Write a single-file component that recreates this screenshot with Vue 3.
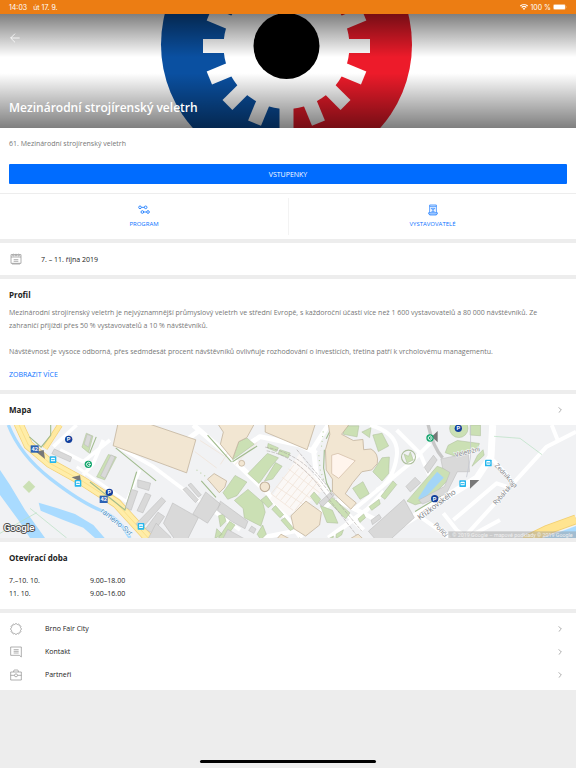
<script setup>
const notchAngles = Array.from({ length: 16 }, (_, i) => i * 22.5)

const hours = [
  { days: '7.–10. 10.', time: '9.00–18.00' },
  { days: '11. 10.', time: '9.00–16.00' },
]

const links = [
  { id: 'city', label: 'Brno Fair City' },
  { id: 'contact', label: 'Kontakt' },
  { id: 'partners', label: 'Partneři' },
]

// Wavy badge outline: twelve bumps around the centre of a 36-unit box.
const badge = Array.from({ length: 72 }, (_, i) => {
  const a = (i * Math.PI) / 36
  const r = 15.4 + 1.8 * Math.cos(12 * a)
  return `${(18 + r * Math.cos(a)).toFixed(2)},${(18 + r * Math.sin(a)).toFixed(2)}`
}).join(' ')

const parkings = [[206, 59], [328, 239], [1375, 25], [1304, 259]]
  .map(([x, y]) => ({ x, y }))
parkings[0].y = 58
parkings[1].y = 217
parkings[3].y = 236
const stops = [[159, 119], [234, 190], [423, 319], [1465, 129], [1388, 191]]
const routes = [[104, 87], [311, 238]]
const rings = [[265, 133], [1290, 54]]
const rowLines = [0, 1, 2, 3, 4, 5]
</script>

<template>
  <div class="page">
    <header class="status">
      <span>14:03</span>
      <span class="date">út 17. 9.</span>
      <span class="power">
        <svg class="wifi" viewBox="0 0 24 18" aria-hidden="true">
          <path d="M1 6a16 16 0 0 1 22 0M5 10.500a10 10 0 0 1 14 0" fill="none" stroke="#fff" stroke-width="3.200" />
          <path d="M8 13.500a6 6 0 0 1 8 0L12 18z" fill="#fff" />
        </svg>
        <span>100 %</span>
        <svg class="battery" viewBox="0 0 42 18" aria-hidden="true">
          <rect x="1" y="1" width="36" height="16" rx="4" fill="none" stroke="#fff" stroke-opacity=".6" stroke-width="1.500" />
          <rect x="2" y="2" width="34" height="14" rx="3" fill="#fff" />
          <path d="M39 6q3 3 0 6z" fill="#fff" fill-opacity=".7" />
        </svg>
      </span>
    </header>

    <section class="hero">
      <svg class="gear" viewBox="0 14 576 114" preserveAspectRatio="xMidYMid slice" aria-hidden="true">
        <path d="M286.500 -81a125.500 125.500 0 0 0 0 251z" fill="#0a50a1" />
        <path d="M286.500 -81a125.500 125.500 0 0 1 0 251z" fill="#ed1b2a" />
        <circle cx="286.500" cy="46" r="63" fill="#fff" />
        <rect
          v-for="a in notchAngles"
          :key="a"
          x="340"
          y="39"
          width="30"
          height="14"
          fill="#fff"
          :transform="`rotate(${a} 286.5 46)`"
        />
        <circle cx="286.500" cy="46" r="33" fill="#000" />
      </svg>
      <div class="shade">
        <button class="back" type="button" aria-label="Zpět">
          <svg viewBox="0 0 30 30" aria-hidden="true">
            <path d="M29 15H2M15 2L2 15l13 13" fill="none" stroke="#fff" stroke-width="2.400" />
          </svg>
        </button>
        <h1>Mezinárodní strojírenský veletrh</h1>
      </div>
    </section>

    <section class="intro">
      <p>61. Mezinárodní strojírenský veletrh</p>
      <button class="tickets" type="button">VSTUPENKY</button>
    </section>

    <nav class="tabs">
      <a href="#program">
        <svg viewBox="0 0 36 36" fill="none" stroke="#1a7bff" stroke-width="2.600" aria-hidden="true">
          <circle cx="6" cy="10" r="4" /><circle cx="23" cy="10" r="4" />
          <circle cx="13" cy="24" r="4" /><circle cx="30" cy="24" r="4" />
          <path d="M10 10h9M17 24h9" />
        </svg>
        PROGRAM
      </a>
      <a href="#vystavovatele">
        <svg viewBox="0 0 36 36" fill="none" stroke="#1a7bff" stroke-width="2.200" aria-hidden="true">
          <path d="M8 26V3h20v23M8 7h20M5 26h26v4H5zM8 30v3h20v-3" />
          <circle cx="18" cy="14" r="2.500" />
          <path d="M18 16v6M13 11v5M23 11v5M13 22h10" />
        </svg>
        VYSTAVOVATELÉ
      </a>
    </nav>

    <section class="when">
      <svg viewBox="0 0 36 36" fill="none" stroke="#8a8a8a" stroke-width="2" aria-hidden="true">
        <path d="M3 5h30v26H3zM3 12h30M11 20h14M11 25h14M6 33h24" />
        <circle cx="10" cy="6" r="2.500" fill="#fff" /><circle cx="18" cy="6" r="2.500" fill="#fff" /><circle cx="26" cy="6" r="2.500" fill="#fff" />
      </svg>
      <span>7. – 11. října 2019</span>
    </section>

    <section class="profile">
      <h2>Profil</h2>
      <p>Mezinárodní strojírenský veletrh je nejvýznamnější průmyslový veletrh ve střední Evropě, s každoroční účastí více než 1 600 vystavovatelů a 80 000 návštěvníků. Ze zahraničí přijíždí přes 50 % vystavovatelů a 10 % návštěvníků.</p>
      <p>Návštěvnost je vysoce odborná, přes sedmdesát procent návštěvníků ovlivňuje rozhodování o investicích, třetina patří k vrcholovému managementu.</p>
      <button class="more" type="button">ZOBRAZIT VÍCE</button>
    </section>

    <section class="map">
      <a class="map-head" href="#mapa">
        <h2>Mapa</h2>
        <svg class="chevron" viewBox="0 0 12 18" aria-hidden="true"><path d="M2 1l8 8-8 8" fill="none" stroke="#999" stroke-width="2.400" /></svg>
      </a>
      <svg class="canvas" viewBox="0 15 1728 339" preserveAspectRatio="xMidYMid slice" role="img" aria-label="Mapa výstaviště">
        <rect y="15" width="1728" height="339" fill="#f1f2f4" />

        <!-- minor streets -->
        <g fill="none" stroke="#fff" stroke-linejoin="round">
          <path d="M230 15L160 80M345 75L460 140L560 215L720 330M310 60L280 130L250 165M180 90L250 125L330 60" stroke-width="11" />
          <path d="M580 15L690 110L800 215L905 354" stroke-width="16" />
          <path d="M560 60L600 30M690 110L780 50L900 75L950 100M985 15L940 85L950 170L1000 240L1090 330" stroke-width="15" />
          <path d="M780 354L900 330L1000 240M985 354L1100 270L1152 215M1010 240L1130 300" stroke-width="14" />
          <path d="M1478 15L1473 110L1430 175L1140 354" stroke-width="21" />
          <path d="M1060 270L1230 130L1290 70M1190 30L1260 100L1290 170M1110 15Q1200 40 1190 110T1130 210" stroke-width="12" />
          <path d="M1728 35L1640 80L1390 354M1655 15L1675 65M1470 110L1530 175M1330 280L1370 330L1390 345M1520 200L1490 190L1360 300M1260 290L1350 354M1500 300L1400 354" stroke-width="12" />
          <path d="M230 140L380 245M380 245L420 150" stroke-width="9" />
        </g>

        <!-- water -->
        <g fill="#a9dbff">
          <path d="M0 150L30 195L75 270L135 354H90L55 300L0 225z" />
          <path d="M116 248L170 264L225 282L280 315L314 354H285L250 323L190 300L122 272z" />
          <path d="M1630 354L1728 318V354z" />
        </g>
        <path d="M25 15Q60 105 150 175T300 270T390 354" fill="none" stroke="#a9dbff" stroke-width="10" />
        <path d="M0 340L110 278M90 265L200 354M1482 49L1560 55L1626 104" fill="none" stroke="#b5dfbf" stroke-width="2" />

        <!-- main road -->
        <path d="M55 10L85 75L150 130L250 185L350 250L445 354" fill="none" stroke="#f3cf72" stroke-width="29" />
        <path d="M135 85L180 15" fill="none" stroke="#f3cf72" stroke-width="17" />
        <path d="M135 85L180 15" fill="none" stroke="#ffe9a0" stroke-width="13" />
        <path d="M55 10L85 75L150 130L250 185L350 250L445 354" fill="none" stroke="#ffeda8" stroke-width="25" />
        <path d="M55 10L85 75L150 130L250 185L350 250L445 354" fill="none" stroke="#f7d878" stroke-width="2" />
        <path d="M1575 362L1640 330L1728 298" fill="none" stroke="#f1cf72" stroke-width="29" />
        <path d="M1575 362L1640 330L1728 298" fill="none" stroke="#ffe490" stroke-width="24" />

        <g transform="translate(0 12) scale(1.102)">
          <!-- plaza -->
          <path d="M735 205L815 80L880 180L840 215L785 250z" fill="#fbf8f6" />
          <g fill="none" stroke="#f0e2d6" stroke-width="2">
            <path v-for="n in rowLines" :key="n" :d="`M${738 + n * 13} ${190 + n * 9}l62 -78`" />
            <path d="M738 190l60 45M752 170l75 50M768 145l80 60M785 122l85 65M800 100l75 70M545 45l65 42M530 75l60 45M600 110l45-70M700 50l-60 60" />
          </g>

          <!-- lawns -->
          <g fill="#cbe0b4" stroke="#aebf9d" stroke-width="1.500">
            <path d="M79 154L96 171L79 188L62 171z" stroke="none" />
            <path d="M295 83L317 90L285 152L263 144zM235 25l18 8-12 45-18-15z" />
            <path d="M633 98L650 48L672 38L692 55z" />
            <path d="M675 135L728 80L758 92L735 120L705 162zM720 155L750 105L768 115L742 150z" />
            <path d="M730 53l28 12-6 10-24-10zM762 70l28 9-5 13-28-11z" />
            <path d="M607 187L640 140L672 158L645 195L620 205z" />
            <path d="M638 208L675 178L715 213L722 240L710 278L665 255L662 230z" />
            <path d="M710 207l15-12 17 23-12 10zM740 232l10-10 22 25-10 8zM765 262l10-7 25 30-10 5zM815 310l37 25-12 5z" />
            <path d="M845 197l10-12 18 20-10 15zM872 222l33 13 15 35-30-2zM895 192l58 50-12 16-48-48z" />
            <path d="M595 250l15-5 5 20-15 15zM590 285l15 15-20 12zM625 265l15 10-30 40-15-5zM700 300l15-25 10 25-15 15z" />
            <path d="M935 5h42l-5 30-37-7zM985 22l25-12-4 27zM1015 30l25-5 18 35-28 15z" />
            <path d="M1040 92l20-2-2 45-18 20-25-25z" />
            <path d="M960 175l28-18 17 33-25 15z" />
            <path d="M1037 197l33-42 10 10-32 40zM1005 225l27-20 3 13-23 17zM975 258l15-13 5 10-15 13zM890 315l18-10-4 14-16 8zM915 300l20-12-5 14-15 10z" />
            <path d="M1212 78L1220 58L1245 45L1305 53L1300 70L1240 88zM1280 3h28v29l-28-2zM1300 85l15-15 3 15-33 30z" />
            <circle cx="1249" cy="12" r="25" />
            <circle cx="1112" cy="90" r="19" fill="none" stroke-width="3" />
            <path d="M1100 82l12 6 5-12 8 22-17 8z" />
            <path d="M1108 210L1190 115L1226 128V145L1165 210L1130 220z" />
          </g>
          <path d="M1190 130L1208 146L1162 195L1147 208L1138 202L1165 160z" fill="#a3d5f7" />
          <g fill="none" stroke="#a1bb8e" stroke-width="3">
            <path d="M245 158L340 234L372 130M80 35l32 28 26-32V3M262 35l-18 45M315 65L425 155M565 30l65 73M633 103L700 60M1130 238l70-42M548 155l40 45" />
            <path d="M883 70l-2 50 8 40 12 25M888 40l10-20" />
          </g>

          <!-- exhibition halls -->
          <g fill="#f2e6d2" stroke="#bfae98" stroke-width="2">
            <path d="M322 -5H392L533 43L508 133L308 59z" />
            <path d="M590 -5H695L672 37L650 48L633 95L600 55L608 22z" />
            <path d="M722 -5V22L836 70L860 -5z" />
            <path d="M893 -5H955L930 28L962 45L988 42L990 70L1010 68Q1032 80 1027 108L1012 125L985 130L960 160L940 190L970 215L955 232L905 185V150L888 125L886 70L898 28z" />
            <path d="M792 250L833 210L875 240L870 275L832 305L800 285z" />
            <path d="M565 150L583 135L617 155L612 172L597 187z" />
            <path d="M740 345L743 325L765 300L802 320V345zM895 345L975 300L1022 345z" />
            <circle cx="658" cy="107" r="8" />
            <circle cx="721" cy="171" r="13" stroke-width="3" />
          </g>
          <path d="M903 85L920 80L967 100L922 148L903 135z" fill="#fff5ed" stroke="#d4bda8" stroke-width="2" />

          <!-- other buildings -->
          <g fill="#d9d9d9" stroke="#bcbcbc" stroke-width="1.500">
            <path d="M148 68l47 22-4 13-50-22zM302 84l11 6-27 58-12-7zM237 28l12 5-8 30-12-8z" />
            <path d="M358 178l17 5-18 52-15-8zM375 152l35 9-5 20-30-9zM396 188l15 6-22 48-16-6z" />
            <path d="M440 200l11 10-66 76-15-14zM430 240l18 12-32 46-20-12zM470 215L540 255L505 325L480 320L445 270z" />
            <path d="M425 270l40 38-15 24-48-17zM498 178l10-6 32 34-8 8zM512 166l8-5 28 32-8 6z" />
            <path d="M560 185L600 218L565 270L525 245zM600 210L675 265L667 285L630 265L592 235z" />
            <path d="M595 335L620 287L700 332V345H600zM685 278l12 8-6 12-14-8z" />
            <path d="M1003 292L1100 205L1128 255L1040 335zM1130 145l15 15-28 25-12-15zM1155 118l25-33 10 13-25 36z" />
            <path d="M1200 95L1275 80L1278 130L1245 130L1215 190L1150 218L1140 207L1210 170L1225 132L1205 120z" />
            <path d="M1010 262l22-16 6 10-24 18zM868 215l32-30 10 8-32 32z" />
          </g>
          <path d="M1165 0Q1178 62 1205 92" fill="none" stroke="#c7c7c7" stroke-width="9" />
          <path d="M1281 -5V90L1270 145" fill="none" stroke="#c4c7d0" stroke-width="2" />

          <!-- tramway -->
          <path d="M722 63Q820 80 880 165L985 292M726 73Q808 88 873 175L970 302M808 70L905 185" fill="none" stroke="#a5a19e" stroke-width="1.500" stroke-dasharray="10 3" />
          <path d="M868 85l4 40 12 36M880 20l-6 52M535 125l25 18" fill="none" stroke="#bad0a7" stroke-width="3" stroke-dasharray="3 10" />
        </g>

        <!-- street labels -->
        <g class="street">
          <text transform="translate(300 275) rotate(39)" class="river">rameno Svr</text>
          <text transform="translate(1260 301) rotate(-37)" class="wide">Křížkovského</text>
          <text transform="translate(1366 112) rotate(-14)">Veletržní</text>
          <text transform="translate(1483 137) rotate(48)">Zedníkova</text>
          <text transform="translate(1488 256) rotate(-48)">Rybářská</text>
          <text transform="translate(1300 315) rotate(48)">Poříčí</text>
        </g>

        <!-- one-way arrows -->
        <path d="M108 95l23-5 4 27zM215 172l25-6 3 20zM1295 50l18-17v34zM1410 180h28l-28 26z" fill="#777" />

        <g v-for="p in parkings" :key="`p${p.x}`">
          <circle :cx="p.x" :cy="p.y" r="11" fill="#123f9c" />
          <text :x="p.x" :y="p.y + 6" class="pin">P</text>
        </g>
        <g v-for="[x, y] in stops" :key="`s${x}`">
          <rect :x="x - 10" :y="y - 10" width="20" height="20" rx="2" fill="#26b7ed" />
          <rect :x="x - 6" :y="y - 6" width="12" height="11" rx="2" fill="#fff" />
          <path :d="`M${x - 5} ${y}h10`" stroke="#26b7ed" stroke-width="3" />
        </g>
        <g v-for="[x, y] in routes" :key="`r${x}`">
          <rect :x="x - 12" :y="y - 11" width="24" height="22" fill="#2b62b4" />
          <text :x="x" :y="y + 6" class="pin">42</text>
        </g>
        <g v-for="[x, y] in rings" :key="`g${x}`" fill="none">
          <circle :cx="x" :cy="y" r="11" fill="#10a56b" />
          <path :d="`M${x + 5} ${y - 4}a6 6 0 1 0 0 8M${x} ${y}h8`" stroke="#fff" stroke-width="3" />
        </g>

        <rect x="1345" y="334" width="383" height="20" fill="#9a9a9a" fill-opacity=".45" />
        <text x="1718" y="350" class="credit">© 2019 Google – mapové podklady © 2019 Google</text>
        <text x="11" y="334" class="brand">Google</text>
      </svg>
    </section>

    <section class="hours">
      <h2>Otevírací doba</h2>
      <table>
        <tbody>
          <tr v-for="h in hours" :key="h.days">
            <th scope="row">{{ h.days }}</th>
            <td>{{ h.time }}</td>
          </tr>
        </tbody>
      </table>
    </section>

    <nav class="links">
      <a v-for="l in links" :key="l.id" :href="`#${l.id}`">
        <svg class="icon" viewBox="0 0 36 36" fill="none" stroke="#8a8a8a" stroke-width="2" aria-hidden="true">
          <polygon v-if="l.id === 'city'" :points="badge" />
          <path v-else-if="l.id === 'contact'" d="M2 3h32v30l-6-5H2zM11 11h15M11 16h15M11 21h15" />
          <template v-else>
            <path d="M2 9h32v24H2zM11 9V6q0-3 3-3h8q3 0 3 3v3M2 19h11M23 19h11" />
            <circle cx="18" cy="19" r="4.500" />
          </template>
        </svg>
        <span>{{ l.label }}</span>
        <svg class="chevron" viewBox="0 0 12 18" aria-hidden="true"><path d="M2 1l8 8-8 8" fill="none" stroke="#999" stroke-width="2.400" /></svg>
      </a>
    </nav>

    <footer><span class="home-bar"></span></footer>
  </div>
</template>

<style>
body {
  margin: 0;
  background: #ededed;
}
</style>

<style scoped>
.page {
  display: flex;
  flex-direction: column;
  min-height: 100vh;
  font-family: "Open Sans", "Noto Sans", sans-serif;
  font-size: 7px;
  line-height: 13px;
  color: #222;
  background: #ededed;
}
.page > * {
  box-sizing: border-box;
}
h1,
h2,
p {
  margin: 0;
}
h2 {
  font-size: 8px;
  line-height: 13px;
  font-weight: 700;
}
a {
  color: inherit;
  text-decoration: none;
}
button {
  border: 0;
  padding: 0;
  background: none;
  font: inherit;
  cursor: pointer;
}
svg {
  display: block;
  flex: none;
}
section,
.tabs,
.links {
  background: #fff;
}

.status {
  display: flex;
  align-items: center;
  height: 14px;
  padding: 0 9px;
  gap: 6px;
  background: #ec7d13;
  color: #fff;
  font-family: Inter, sans-serif;
  font-size: 7px;
}
.power {
  display: flex;
  align-items: center;
  gap: 2px;
  margin-left: auto;
}
.wifi {
  width: 8px;
  height: 6px;
}
.battery {
  width: 14px;
  height: 6px;
}

.hero {
  display: grid;
  height: 114px;
}
.hero > * {
  grid-area: 1 / 1;
}
.gear {
  width: 100%;
  height: 114px;
}
.shade {
  display: flex;
  flex-direction: column;
  justify-content: space-between;
  align-items: flex-start;
  padding: 19px 9px 11px;
  background: linear-gradient(rgba(0, 0, 0, 0.5), transparent 38%, transparent 52%, rgba(0, 0, 0, 0.5));
}
.back {
  padding: 0 1px;
}
.back svg {
  width: 10px;
  height: 10px;
}
h1 {
  font-size: 12px;
  line-height: 18px;
  font-weight: 600;
  color: #fff;
}

.intro {
  padding: 9px 9px 9px;
  color: #777;
}
.tickets {
  display: block;
  width: 100%;
  height: 20px;
  margin-top: 14px;
  border-radius: 1px;
  background: #006cff;
  color: #fff;
}
.tabs {
  display: grid;
  grid-template-columns: 1fr 1fr;
  padding: 4px 0;
  border-top: 1px solid #ededed;
  font-size: 6px;
  color: #0a72ff;
}
.tabs a {
  display: flex;
  flex-direction: column;
  align-items: center;
  gap: 2px;
  padding: 6px 0 4px;
}
.tabs a + a {
  border-left: 1px solid #f3f3f3;
}
.tabs svg {
  width: 12px;
  height: 12px;
}

.when,
.profile,
.map,
.hours,
.links {
  margin-top: 4px;
}
.when {
  display: flex;
  align-items: center;
  gap: 19px;
  height: 32px;
  padding: 0 10px;
}
.when svg,
.icon {
  width: 12px;
  height: 12px;
}
.profile {
  padding: 9px 9px;
}
.profile p {
  color: #777;
}
.profile h2 {
  margin-bottom: 5px;
}
.profile p + p {
  margin-top: 13px;
}
.more {
  margin-top: 10px;
  color: #0a72ff;
}
.map-head {
  display: flex;
  align-items: center;
  justify-content: space-between;
  height: 31px;
  padding: 0 14px 0 9px;
}
.chevron {
  width: 4px;
  height: 6px;
}
.canvas {
  width: 100%;
  height: 113px;
}
.street {
  font-family: Roboto, sans-serif;
  font-size: 20px;
  fill: #85878b;
  stroke: #fff;
  stroke-width: 3px;
  paint-order: stroke;
}
.street .wide {
  font-size: 23px;
}
.street .river {
  font-size: 23px;
  fill: #4a8fc4;
}
.pin {
  font-family: Roboto, sans-serif;
  font-size: 17px;
  font-weight: 700;
  text-anchor: middle;
  fill: #fff;
}
.credit {
  font-family: Roboto, sans-serif;
  font-size: 16px;
  text-anchor: end;
  fill: #f0f0f0;
}
.brand {
  font-family: Roboto, sans-serif;
  font-size: 29px;
  font-weight: 500;
  fill: #fff;
  stroke: #555;
  stroke-width: 6px;
  paint-order: stroke;
}

.hours {
  padding: 9px 9px;
}
table {
  margin-top: 10px;
  border-collapse: collapse;
}
th,
td {
  padding: 0;
  font-weight: 400;
  text-align: left;
}
th {
  width: 81px;
}

.links {
  padding: 4px 0;
}
.links a {
  display: grid;
  grid-template-columns: 12px 1fr 4px;
  align-items: center;
  column-gap: 23px;
  padding: 5px 14px 5px 10px;
}

footer {
  display: flex;
  justify-content: center;
  margin-top: auto;
  padding-bottom: 5px;
}
.home-bar {
  width: 176px;
  height: 3px;
  border-radius: 2px;
  background: #000;
}
</style>
